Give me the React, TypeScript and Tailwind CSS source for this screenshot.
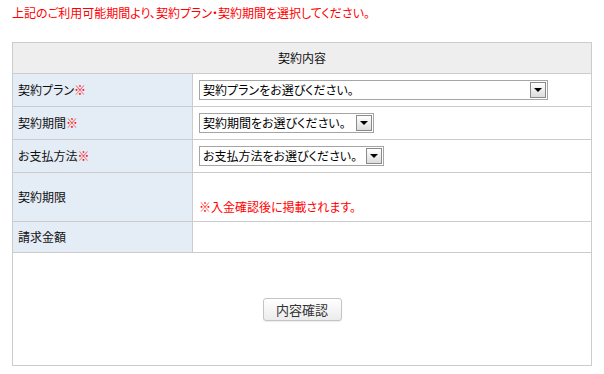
const jp = "font-['MS_PGothic','Noto_Sans_CJK_JP',sans-serif] [font-feature-settings:'palt']"

function SelectBox({ label, width }: { label: string; width: string }) {
  return (
    <div className={`flex h-[20px] items-center border border-[#a5a5a5] bg-white ${width}`}>
      <span className="flex-1 whitespace-nowrap pl-[3px] text-[12px] leading-[14px] text-black">{label}</span>
      <span className="mr-[1px] flex h-[16px] w-[16px] shrink-0 items-center justify-center border border-[#8a8a8a] bg-gradient-to-b from-white to-[#dcdcdc]">
        <span className="h-0 w-0 border-x-[4px] border-t-[4px] border-x-transparent border-t-black" />
      </span>
    </div>
  )
}

function Row({ label, required, height, children }: { label: string; required?: boolean; height: string; children?: React.ReactNode }) {
  return (
    <div className={`grid grid-cols-[180px_1fr] border-b border-[#cccccc] ${height}`}>
      <div className="flex items-center border-r border-[#cccccc] bg-[#e4ecf6] pl-[5px] text-[12px] text-[#111]">
        {label}
        {required && <span className="text-[#ff0000]">※</span>}
      </div>
      <div className="flex items-center pl-[6px]">{children}</div>
    </div>
  )
}

export default function App() {
  return (
    <div className={`h-[374px] w-[604px] bg-white ${jp}`}>
      <p className="pl-[12px] pt-[6px] text-[12px] leading-[14px] text-[#ff0000]">
        上記のご利用可能期間より、契約プラン・契約期間を選択してください。
      </p>

      <div className="ml-[12px] mt-[22px] flex h-[324px] w-[580px] flex-col border border-[#cccccc]">
        {/* ヘッダー */}
        <div className="flex h-[31px] items-center justify-center border-b border-[#cccccc] bg-[#eeeeee] text-[12px] text-[#111]">
          契約内容
        </div>

        <Row label="契約プラン" required height="h-[33px]">
          <SelectBox label="契約プランをお選びください。" width="w-[349px]" />
        </Row>
        <Row label="契約期間" required height="h-[33px]">
          <SelectBox label="契約期間をお選びください。" width="w-[175px]" />
        </Row>
        <Row label="お支払方法" required height="h-[33px]">
          <SelectBox label="お支払方法をお選びください。" width="w-[185px]" />
        </Row>
        <div className="grid h-[49px] grid-cols-[180px_1fr] border-b border-[#cccccc]">
          <div className="flex items-center border-r border-[#cccccc] bg-[#e4ecf6] pl-[5px] text-[12px] text-[#111]">
            契約期限
          </div>
          <div className="flex items-end pb-[7px] pl-[6px] text-[12px] leading-[14px] text-[#ff0000]">
            ※入金確認後に掲載されます。
          </div>
        </div>
        <Row label="請求金額" height="h-[31px]" />

        {/* ボタン */}
        <div className="flex flex-1 items-center justify-center">
          <button className="h-[23px] w-[79px] rounded-[3px] border border-[#c4c4c4] bg-gradient-to-b from-white to-[#ececec] text-[13px] leading-none text-[#333] shadow-[0_1px_1px_rgba(0,0,0,0.08)]">
            内容確認
          </button>
        </div>
      </div>
    </div>
  )
}
